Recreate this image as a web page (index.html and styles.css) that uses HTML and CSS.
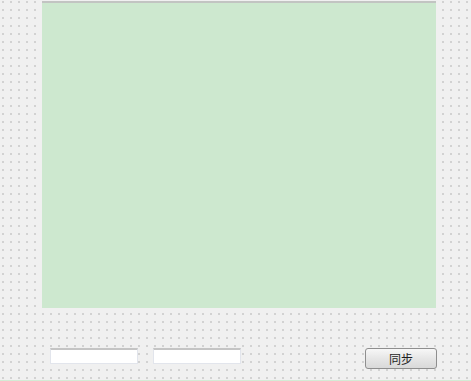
FILE: index.html
```html
<!DOCTYPE html>
<html>
<head>
<meta charset="utf-8">
<link rel="stylesheet" href="styles.css">
</head>
<body>
<div class="form">
  <div class="canvas"></div>
  <div class="controls">
    <div class="field"></div>
    <div class="field"></div>
    <div class="spacer"></div>
    <button class="btn">同步</button>
  </div>
  <div class="edge"></div>
</div>
</body>
</html>
```
FILE: styles.css
```css
html, body {
  margin: 0;
  padding: 0;
}
body {
  width: 471px;
  height: 381px;
  overflow: hidden;
  background-color: #f0f0f0;
  background-image: radial-gradient(circle at 1px 1px, #d2d2d2 0.9px, transparent 1.1px);
  background-size: 8px 8px;
  background-position: 2px 1px;
  font-family: "Noto Sans CJK SC", "Noto Sans", sans-serif;
}
.form {
  display: flex;
  flex-direction: column;
  height: 381px;
}
.canvas {
  margin: 1px 0 0 42px;
  width: 394px;
  height: 305px;
  border-top: 2px solid #c2c4c2;
  background: #cde8cf;
}
.controls {
  display: flex;
  align-items: flex-start;
  margin-top: 40px;
  padding-left: 50px;
  width: 387px;
}
.field {
  width: 86px;
  height: 13px;
  background: #ffffff;
  border: 1px solid #e2e5ec;
  border-top: 2px solid #c4c4c4;
  margin-right: 15px;
}
.spacer {
  flex: 1;
}
.btn {
  width: 72px;
  height: 21px;
  padding: 0;
  margin: 0;
  border: 1px solid #8e8e8e;
  border-radius: 3px;
  background: linear-gradient(#f7f7f7, #e6e6e6 50%, #d9d9d9);
  font-family: "Noto Sans CJK SC", "Noto Sans", sans-serif;
  font-size: 12px;
  line-height: 19px;
  color: #1e1e1e;
}
.edge {
  margin-top: auto;
  height: 1px;
  background: #d3ebd5;
}
```
